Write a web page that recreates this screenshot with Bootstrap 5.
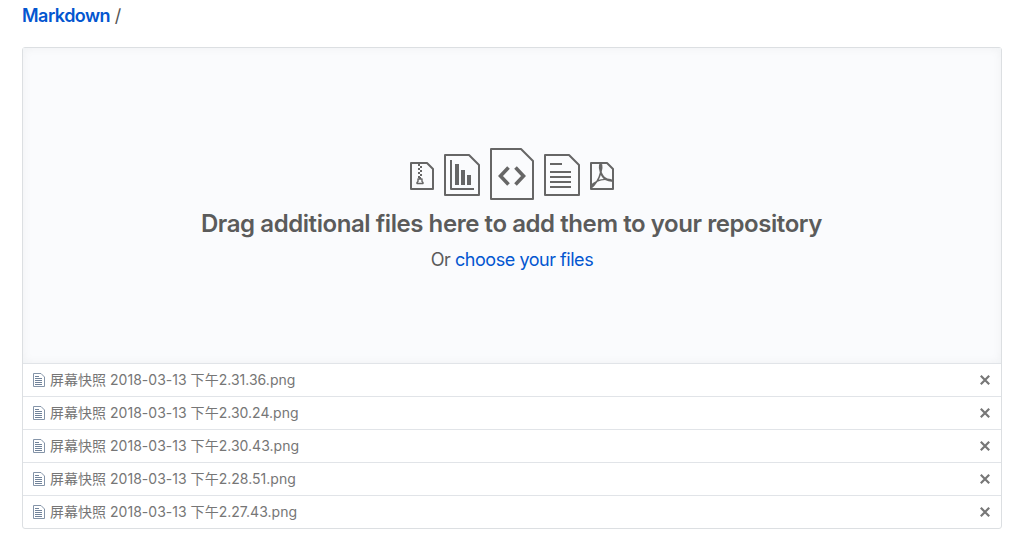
<!DOCTYPE html>
<html lang="en">
<head>
<meta charset="utf-8">
<meta name="viewport" content="width=device-width, initial-scale=1">
<title>Upload files</title>
<link rel="stylesheet" href="https://cdn.jsdelivr.net/npm/bootstrap@5.3.0/dist/css/bootstrap.min.css">
<style>
body{font-family:Inter,"Noto Sans CJK SC",sans-serif;color:#586069;overflow:hidden}
a{color:#0356d0;text-decoration:none}
.upload-page{padding:3px 23px 0 22px}
.crumbs{font-size:18px;line-height:26px;height:44px;color:#555;letter-spacing:-.52px}
.crumbs a{font-weight:600}
.upload-box{border:1px solid #dcdfe2;border-radius:3px}
.drop-zone{height:315px;padding-top:100px;background:#fafbfd;box-shadow:inset 0 0 10px rgba(27,31,35,.05);color:#5b5b5b}
.file-icons{gap:10px;height:52px;color:#666}
.file-icons svg{display:block;fill:none;stroke:currentColor;stroke-width:2;stroke-linejoin:round}
.icon-mid{margin-top:2px}
.icon-small{margin-top:4px}
.drop-title{font-size:24px;line-height:36px;font-weight:600;letter-spacing:-.43px;margin:6px 1px 0 0}
.drop-sub{font-size:18px;line-height:27px;letter-spacing:-.46px;margin:4px 0 0}
.file-row{height:33px;border-top:1px solid #e1e4e8;padding:0 11px 0 10px;font-size:14px;line-height:32px;color:#767676}
.file-row svg{flex:none;display:block}
.file-name{margin-left:5px;letter-spacing:.02px;white-space:nowrap}
.remove{color:#777}
</style>
</head>
<body>
<svg class="d-none">
  <symbol id="doc" viewBox="0 0 12 14"><path d="M.5 .5H8L11.5 4V13.5H.5Z" fill="none" stroke="#8494a8"/><path d="M2 3.5H6M2 5.5H9M2 7.5H9M2 9.5H9M2 11.5H9" stroke="#71839a" fill="none"/></symbol>
  <symbol id="close" viewBox="0 0 10 10"><path d="M.8 .8L9.200 9.200M9.200 .8L.8 9.200" stroke="currentColor" stroke-width="2.2" fill="none"/></symbol>
</svg>
<main class="upload-page">
  <div class="crumbs"><a href="#">Markdown</a> /</div>
  <div class="upload-box">
    <div class="drop-zone text-center">
      <div class="file-icons d-flex justify-content-center align-items-center">
        <svg class="icon-small" width="24" height="28" viewBox="0 0 24 28"><path d="M1 1H17L23 7V27H1Z"/><path stroke="none" fill="currentColor" d="M8 2h2v2H8zM10 4h2v2h-2zM8 6h2v2H8zM10 8h2v2h-2zM8 10h2v2H8zM10 12h2v2h-2zM8 14h2v2H8zM9 15h2v2h-2z"/><path d="M8 17H12V19.500L13 20.500V21.500H7V20.500L8 19.500Z" stroke-width="1.400"/></svg>
        <svg class="icon-mid" width="36" height="42" viewBox="0 0 36 42"><path d="M1 1H25L35 11V41H1Z"/><path d="M7 6V35H30"/><path d="M13 10V31M19 16V31M25 21V31" stroke-width="4"/></svg>
        <svg width="44" height="52" viewBox="0 0 44 52"><path d="M1 1H31L43 13V51H1Z"/><path d="M18.500 19.500L10.500 28L18.500 36.500M25.500 19.500L33.500 28L25.500 36.500" stroke-width="3.600" stroke-linejoin="miter"/></svg>
        <svg class="icon-mid" width="36" height="42" viewBox="0 0 36 42"><path d="M1 1H25L35 11V41H1Z"/><path d="M6 10H18M6 18H27M6 23H27M6 28H27M6 33H27"/></svg>
        <svg class="icon-small" width="24" height="28" viewBox="0 0 24 28"><path d="M1 1H17L23 7V27H1Z"/><path stroke="none" fill="currentColor" d="M9 2.500Q10.800 1 12.300 2.500Q13 6 11.700 10Q13.500 15 17.500 16.500Q21 16.500 23 18V20Q18 19.500 15 18Q11 18 7.500 19.800Q4.500 24.500 1 27V22.500Q3 20.500 6.300 19Q9 14.500 9.800 10.500Q8.300 6 9 2.500ZM10.800 13Q10 15.500 8.800 17.700Q11 17 13.700 16.900Q12 15.300 10.800 13Z"/></svg>
      </div>
      <h1 class="drop-title">Drag additional files here to add them to your repository</h1>
      <p class="drop-sub">Or <a href="#">choose your files</a></p>
    </div>
    <div class="file-row d-flex align-items-center"><svg width="12" height="14"><use href="#doc"/></svg><span class="file-name">屏幕快照 2018-03-13 下午2.31.36.png</span><svg class="remove ms-auto" width="10" height="10"><use href="#close"/></svg></div>
    <div class="file-row d-flex align-items-center"><svg width="12" height="14"><use href="#doc"/></svg><span class="file-name">屏幕快照 2018-03-13 下午2.30.24.png</span><svg class="remove ms-auto" width="10" height="10"><use href="#close"/></svg></div>
    <div class="file-row d-flex align-items-center"><svg width="12" height="14"><use href="#doc"/></svg><span class="file-name">屏幕快照 2018-03-13 下午2.30.43.png</span><svg class="remove ms-auto" width="10" height="10"><use href="#close"/></svg></div>
    <div class="file-row d-flex align-items-center"><svg width="12" height="14"><use href="#doc"/></svg><span class="file-name">屏幕快照 2018-03-13 下午2.28.51.png</span><svg class="remove ms-auto" width="10" height="10"><use href="#close"/></svg></div>
    <div class="file-row d-flex align-items-center"><svg width="12" height="14"><use href="#doc"/></svg><span class="file-name">屏幕快照 2018-03-13 下午2.27.43.png</span><svg class="remove ms-auto" width="10" height="10"><use href="#close"/></svg></div>
  </div>
</main>
<script src="https://cdn.jsdelivr.net/npm/bootstrap@5.3.0/dist/js/bootstrap.bundle.min.js"></script>
</body>
</html>
